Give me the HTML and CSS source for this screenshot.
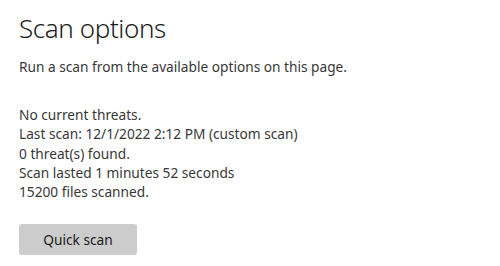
FILE: index.html
```html
<!DOCTYPE html>
<html lang="en">
<head>
    <meta charset="UTF-8">
    <meta name="viewport" content="width=device-width, initial-scale=1.0">
    <title>Scan options</title>
    <link rel="stylesheet" href="styles.css">
</head>
<body>
    <div class="page">
        <h1 class="title">Scan options</h1>
        <p class="intro">Run a scan from the available options on this page.</p>

        <div class="status">
            <p>No current threats.</p>
            <p>Last scan: 12/1/2022 2:12 PM (custom scan)</p>
            <p>0 threat(s) found.</p>
            <p>Scan lasted 1 minutes 52 seconds</p>
            <p>15200 files scanned.</p>
        </div>

        <button class="button">Quick scan</button>
    </div>
</body>
</html>
```

FILE: styles.css
```css
body {
    margin: 0;
    background: #fff;
    font-family: "Noto Sans", "Open Sans", sans-serif;
    color: #383838;
}

.page {
    padding: 10px 19px;
}

.title {
    margin: 0;
    font-size: 26px;
    font-weight: 300;
    letter-spacing: -0.4px;
    line-height: 36px;
    color: #1b1b1b;
}

.intro {
    margin: 11px 0 0;
    font-size: 13.7px;
    line-height: 20px;
}

.status {
    margin-top: 28px;
    font-size: 13.7px;
    line-height: 19.3px;
}

.status p {
    margin: 0;
}

.button {
    display: block;
    margin-top: 23px;
    width: 118px;
    height: 31px;
    border: none;
    border-radius: 3px;
    background: #cccccc;
    color: #1b1b1b;
    font-family: inherit;
    font-size: 13.7px;
}
```
